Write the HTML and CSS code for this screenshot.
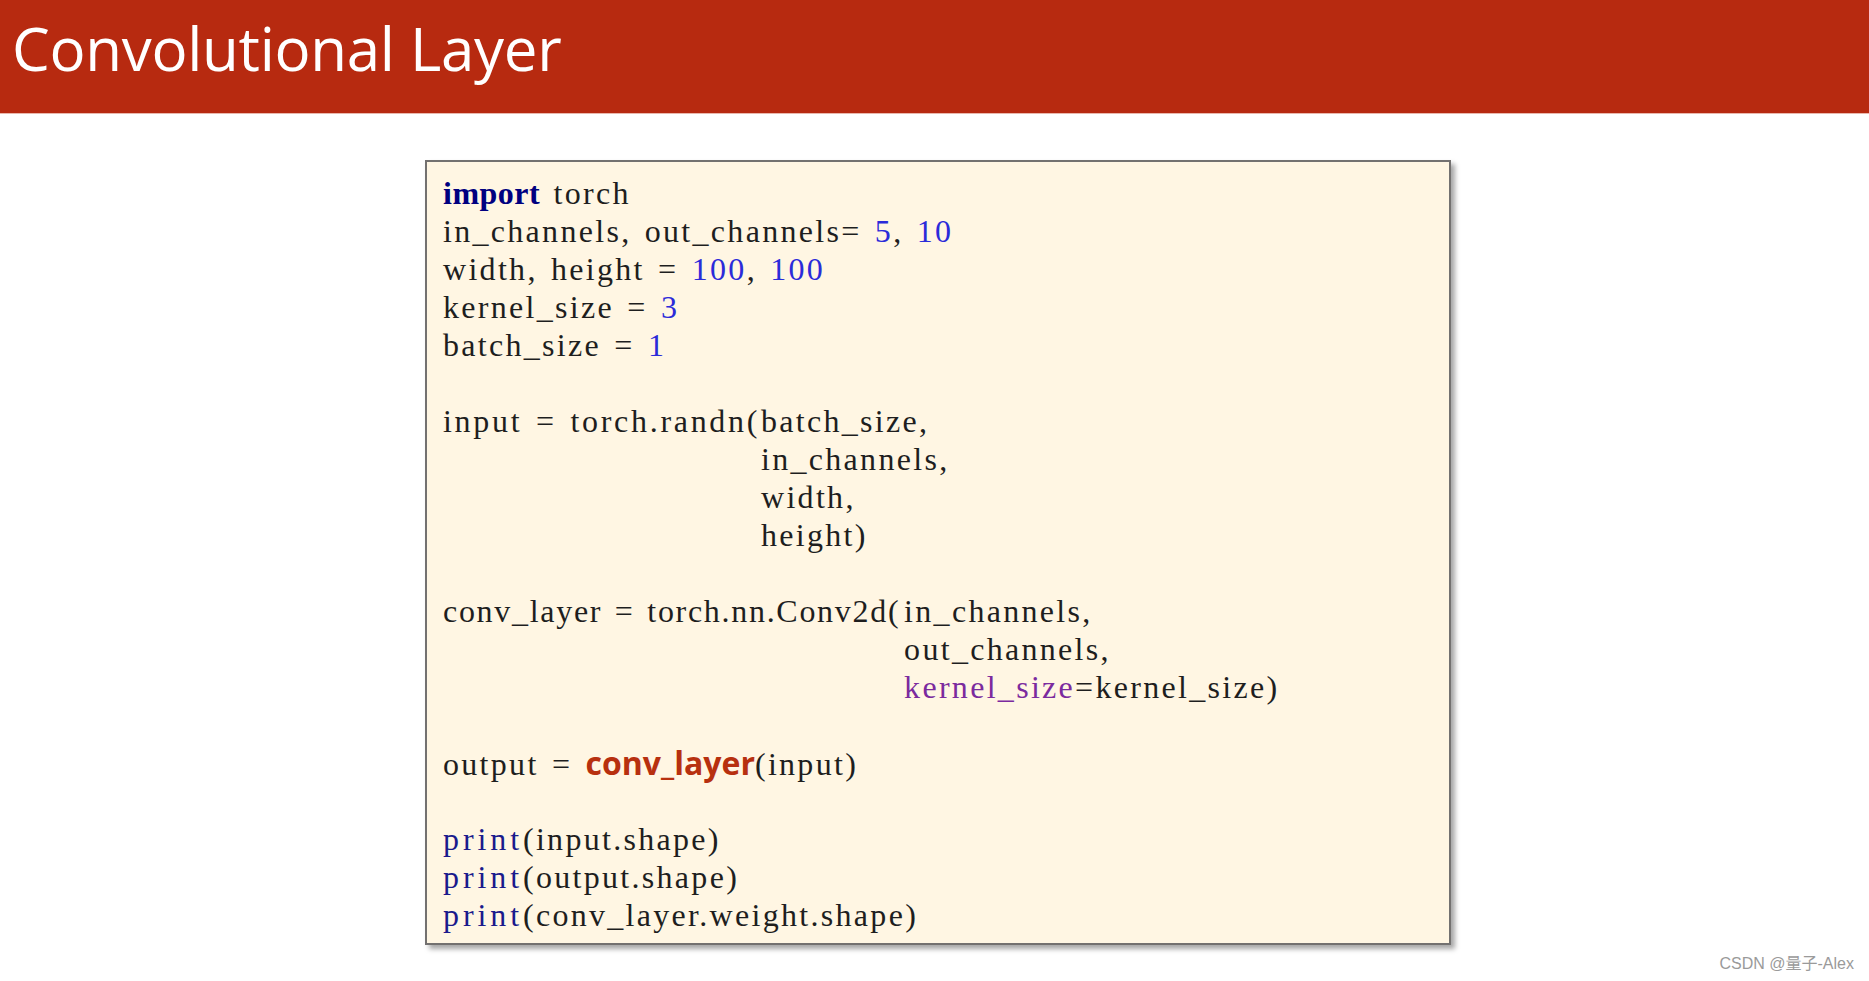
FILE: index.html
```html
<!DOCTYPE html>
<html lang="en">
<head>
<meta charset="utf-8">
<title>Convolutional Layer</title>
<link rel="stylesheet" href="styles.css">
</head>
<body>
<header class="slide-header">
  <h1 class="slide-title">Convolutional Layer</h1>
</header>
<main class="slide-body">
  <div class="code-box">
    <div class="code">
      <div class="line"><span class="kw">import</span> torch</div>
      <div class="line">in_channels, out_channels= <span class="num">5</span>, <span class="num">10</span></div>
      <div class="line">width, height = <span class="num">100</span>, <span class="num">100</span></div>
      <div class="line">kernel_size = <span class="num">3</span></div>
      <div class="line">batch_size = <span class="num">1</span></div>
      <div class="line blank"></div>
      <div class="call">
        <span class="head head-20">input = torch.randn(</span>
        <div class="args">
          <div class="line">batch_size,</div>
          <div class="line">in_channels,</div>
          <div class="line">width,</div>
          <div class="line">height)</div>
        </div>
      </div>
      <div class="line blank"></div>
      <div class="call">
        <span class="head head-29">conv_layer = torch.nn.Conv2d(</span>
        <div class="args">
          <div class="line">in_channels,</div>
          <div class="line">out_channels,</div>
          <div class="line"><span class="arg">kernel_size</span>=kernel_size)</div>
        </div>
      </div>
      <div class="line blank"></div>
      <div class="line">output = <span class="hl">conv_layer</span>(input)</div>
      <div class="line blank"></div>
      <div class="line"><span class="fn">print</span>(input.shape)</div>
      <div class="line"><span class="fn">print</span>(output.shape)</div>
      <div class="line"><span class="fn">print</span>(conv_layer.weight.shape)</div>
    </div>
  </div>
</main>
<footer class="watermark">CSDN @量子-Alex</footer>
</body>
</html>
```

FILE: styles.css
```css
html, body {
  margin: 0;
  padding: 0;
  background: #ffffff;
}

body {
  width: 1869px;
  height: 981px;
  position: relative;
  overflow: hidden;
}

.slide-header {
  height: 114px;
  background: #b72a10;
  border-bottom: 1px solid #e9b8ad;
  padding: 18px 0 0 12px;
  box-sizing: border-box;
}

.slide-title {
  margin: 0;
  font-family: "Open Sans", "Noto Sans", sans-serif;
  font-weight: 400;
  font-size: 60px;
  line-height: 60px;
  letter-spacing: -0.3px;
  color: #ffffff;
}

.slide-body {
  padding-top: 46px;
}

.code-box {
  --col: 15.9px;
  margin-left: 425px;
  width: 1026px;
  height: 785px;
  box-sizing: border-box;
  background: #fff6e3;
  border: 2px solid #737170;
  box-shadow: 4px 4px 5px rgba(0, 0, 0, 0.35);
  padding: 12px 0 0 16px;
}

.code {
  font-family: "Liberation Serif", "Times New Roman", serif;
  font-size: 32px;
  letter-spacing: 2.3px;
  word-spacing: 3px;
  line-height: 38px;
  color: #1e1e1e;
}

.line {
  height: 38px;
  white-space: pre;
}

.call {
  display: flex;
  align-items: flex-start;
}

.head {
  flex: none;
  white-space: pre;
  line-height: 38px;
}

.head-20 {
  width: calc(20 * var(--col));
  letter-spacing: 2.7px;
}

.head-29 {
  width: calc(29 * var(--col));
  letter-spacing: 1.7px;
}

.args {
  display: flex;
  flex-direction: column;
}

.kw {
  color: #000080;
  font-weight: 700;
  letter-spacing: 0.5px;
}

.num {
  color: #2b2bd9;
}

.fn {
  color: #1a1a8c;
  letter-spacing: 3.9px;
}

.arg {
  color: #7b2a9e;
}

.hl {
  font-family: "Open Sans", "Noto Sans", sans-serif;
  font-weight: 700;
  font-size: 32px;
  letter-spacing: 0;
  color: #b7300f;
}

.watermark {
  position: absolute;
  right: 15px;
  bottom: 7px;
  font-family: "Liberation Sans", "Noto Sans CJK SC", sans-serif;
  font-size: 16px;
  color: #9a9a9a;
}
```
